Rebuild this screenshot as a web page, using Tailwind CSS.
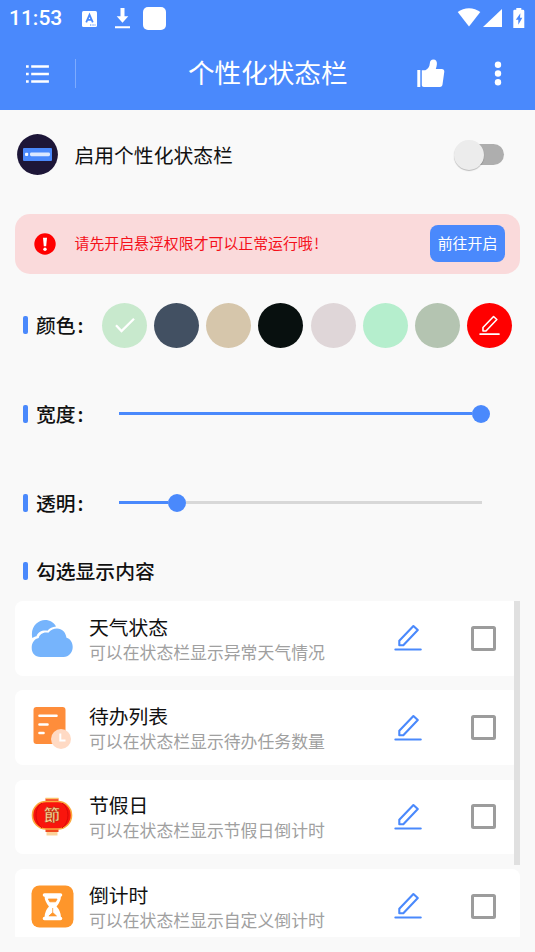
<!DOCTYPE html>
<html lang="zh-CN">
<head>
<meta charset="utf-8">
<title>个性化状态栏</title>
<script src="https://cdn.jsdelivr.net/npm/@tailwindcss/browser@4"></script>
</head>
<body class="w-[535px] h-[952px] overflow-hidden bg-[#f9f9f9] font-['Noto_Sans_CJK_SC',sans-serif] text-[#111]">
<svg class="hidden">
  <symbol id="edit" viewBox="0 0 28 28">
    <path d="M5.300 21.300v-4.600L19.400 2l4.400 4L9.300 21.300z" fill="none" stroke="currentColor" stroke-width="2.100" stroke-linejoin="round"/>
    <path d="M1.400 25.500h25.300" stroke="currentColor" stroke-width="2.200" stroke-linecap="round"/>
  </symbol>
</svg>
<div class="h-[952px] flex flex-col">
  <header class="h-[110px] shrink-0 bg-[#4a89fc] text-white flex flex-col">
    <div class="h-[37px] pl-[9px] pr-[10px] flex items-center">
      <span class="w-[73px] font-['Roboto',sans-serif] font-medium text-[21px] leading-none">11:53</span>
      <svg class="w-[15px] h-[16px]" viewBox="0 0 15 16"><rect width="15" height="16" rx="1.5" fill="#fff"/><path d="M4.2 11.3 7.5 3.8l3.3 7.5M5.5 8.9h4" fill="none" stroke="#4a89fc" stroke-width="1.8"/><path d="M8 14h1.3M10.4 14h1.3M12.5 14h1" stroke="#4a89fc" stroke-width="1.2"/></svg>
      <svg class="ml-[17px] w-[17px] h-[21px]" viewBox="0 0 17 21"><path d="M6.5 0h4v8.3h3.800l-5.800 6.500-5.800-6.500h3.800zM1 18.200h15v2H1z" fill="#fff"/></svg>
      <div class="ml-3 w-[23px] h-[23px] rounded-[5px] bg-white"></div>
      <div class="ml-auto pb-[2px] flex items-center">
        <svg class="w-[24px] h-[19px]" viewBox="0 0 24 19"><path d="M.7 4.100C7-1 17-1 23.300 4.100L12 18.500z" fill="#fff"/></svg>
        <svg class="ml-[2px] mt-[1px] w-[19px] h-[18px]" viewBox="0 0 19 18"><path d="M19 0v18H0z" fill="#fff"/></svg>
        <svg class="ml-[11px] w-[12px] h-[20px]" viewBox="0 0 12 20"><path d="M3.300 0h5v1.800H10A1.300 1.300 0 0 1 11.300 3v17H.3V3a1.300 1.300 0 0 1 1.300-1.200h1.700z" fill="#fff"/><path d="M7.400 5.200 2.800 11.800h2.500v5l4-7H7z" fill="#4a89fc"/></svg>
      </div>
    </div>
    <div class="h-[73px] flex items-center">
      <svg class="ml-[26px] w-[24px] h-[20px]" viewBox="0 0 24 20"><g stroke="#fff" stroke-width="2.600"><path d="M5.200 2.500h17.700M5.200 10h17.700M5.200 17.500h17.700"/><path d="M0 2.500h2.700M0 10h2.700M0 17.500h2.700"/></g></svg>
      <div class="ml-[25px] w-px h-[29px] bg-[#7dabff]"></div>
      <h1 class="ml-[112px] pb-[4px] w-[229px] text-[26.600px] leading-[38px] whitespace-nowrap">个性化状态栏</h1>
      <svg class="w-[28px] h-[29px]" viewBox="0 0 28 29"><path d="M.3 11h3v17h-3zM4.800 11.200h3.500c3-1.400 4.200-3.500 4.500-6.600.1-2.700 1.500-4.100 3.500-4.100 2.700 0 3.800 1.900 3.600 4.500-.1 1.800-.5 3.300-1.100 4.900h5.900c1.800 0 2.800 1.200 2.600 2.900l-1.800 12.700c-.2 1.600-1 2.500-2.600 2.500H7c-1.500 0-2.200-.7-2.200-2z" fill="#fff"/></svg>
      <svg class="ml-[48.500px] w-[8px] h-[25px]" viewBox="0 0 8 25"><g fill="#fff"><circle cx="4" cy="3.800" r="3.200"/><circle cx="4" cy="12.500" r="3.200"/><circle cx="4" cy="21.300" r="3.200"/></g></svg>
    </div>
  </header>

  <section class="h-[104px] shrink-0 pl-[17px] pr-[31px] pb-[15px] flex items-center">
    <svg class="w-[41px] h-[41px]" viewBox="0 0 41 41"><circle cx="20.500" cy="20.500" r="20.400" fill="#1d1638"/><rect x="6" y="14" width="29" height="13" rx="1" fill="#4a89fc"/><rect x="8" y="18.700" width="3.200" height="3.200" rx="1" fill="#f4f8ff"/><rect x="13" y="18.500" width="20" height="3.700" rx="1.400" fill="#dce8ff"/></svg>
    <span class="ml-[16.500px] text-[19.800px] leading-[30px]">启用个性化状态栏</span>
    <div class="ml-auto w-[50px] h-[30px] flex items-center">
      <div class="w-[30px] h-[30px] z-10 rounded-full bg-[#ececec] shadow-[0_1px_1px_rgba(0,0,0,0.25)]"></div>
      <div class="-ml-[20px] w-[40px] h-[21px] rounded-full bg-[#aeaeae]"></div>
    </div>
  </section>

  <section class="mx-[15px] h-[59.500px] shrink-0 rounded-[15px] bg-[#fadadb] pl-[19px] pr-[15px] flex items-center text-[14.900px]">
    <svg class="w-[22px] h-[22px]" viewBox="0 0 22 22"><circle cx="11" cy="11" r="10.700" fill="#f00"/><path d="M9 4.800h4l-.8 8.400H9.800z" fill="#fff"/><circle cx="11" cy="16.300" r="1.700" fill="#fff"/></svg>
    <span class="ml-[18.500px] pb-px text-[#f5101a] whitespace-nowrap">请先开启悬浮权限才可以正常运行哦<span class="ml-[1.500px]">!</span></span>
    <button class="ml-auto w-[75px] h-[37px] pb-px rounded-[8px] bg-[#4a89fc] text-white whitespace-nowrap">前往开启</button>
  </section>

  <section class="h-[89px] mt-[7.500px] shrink-0 pl-[23px] pr-[23px] pb-px flex items-center">
    <div class="w-[5px] h-[18px] rounded-[2px] bg-[#4a89fc]"></div>
    <span class="ml-[8px] pb-px w-[66px] text-[19.800px] font-medium whitespace-nowrap">颜色<span class="ml-[2px]">:</span></span>
    <div class="w-[410px] flex justify-between">
      <div class="w-[45px] h-[45px] rounded-full bg-[#c8e9cd] flex items-center justify-center"><svg class="w-[22px] h-[18px]" viewBox="0 0 22 18"><path d="M2 9.300 7.500 15 20 2.800" fill="none" stroke="#fff" stroke-width="2.300"/></svg></div>
      <div class="w-[45px] h-[45px] rounded-full bg-[#425062]"></div>
      <div class="w-[45px] h-[45px] rounded-full bg-[#d6c6ab]"></div>
      <div class="w-[45px] h-[45px] rounded-full bg-[#08100f]"></div>
      <div class="w-[45px] h-[45px] rounded-full bg-[#dfd6d8]"></div>
      <div class="w-[45px] h-[45px] rounded-full bg-[#b5eecd]"></div>
      <div class="w-[45px] h-[45px] rounded-full bg-[#b4c4b1]"></div>
      <div class="w-[45px] h-[45px] rounded-full bg-[#f00] text-white flex items-center justify-center"><svg class="w-[21px] h-[21px]"><use href="#edit"/></svg></div>
    </div>
  </section>

  <section class="h-[89px] shrink-0 pl-[23px] pb-[2px] flex items-center">
    <div class="w-[5px] h-[18px] rounded-[2px] bg-[#4a89fc]"></div>
    <span class="ml-[8px] w-[83px] text-[19.800px] font-medium whitespace-nowrap">宽度<span class="ml-[2px]">:</span></span>
    <div class="w-[353px] h-[3px] bg-[#4a89fc]"></div>
    <div class="w-[18px] h-[18px] rounded-full bg-[#4a89fc]"></div>
  </section>

  <section class="h-[89px] shrink-0 pl-[23px] pb-[2px] flex items-center">
    <div class="w-[5px] h-[18px] rounded-[2px] bg-[#4a89fc]"></div>
    <span class="ml-[8px] w-[83px] text-[19.800px] font-medium whitespace-nowrap">透明<span class="ml-[2px]">:</span></span>
    <div class="w-[49px] h-[3px] bg-[#4a89fc]"></div>
    <div class="w-[18px] h-[18px] rounded-full bg-[#4a89fc]"></div>
    <div class="w-[296px] h-[3px] bg-[#d8d8d8]"></div>
  </section>

  <section class="h-[53px] shrink-0 pl-[23px] pb-[8px] flex items-center">
    <div class="w-[5px] h-[18px] rounded-[2px] bg-[#4a89fc]"></div>
    <h2 class="ml-[8px] text-[19.800px] font-medium">勾选显示内容</h2>
  </section>

  <main class="relative mx-[15px] h-[336px] shrink-0 overflow-hidden flex flex-col gap-[14.800px]">
    <article class="h-[74.500px] shrink-0 bg-white rounded-[8px] pl-[16px] pr-[24px] flex items-center">
      <svg class="w-[43px] h-[43px]" viewBox="0 0 43 43"><path d="M1.300 21C-1 10 7 3 14 3c5 0 9 2.700 11 6.400-3.500.2-6.400 1.700-8.600 4.300C11 13 7 15 5.500 19.200c-1.800.2-3 .9-4.200 1.800z" fill="#76b4fc"/><path d="M9.500 40C4 40 .5 36 .7 30.500c.1-5 3-8.700 7-9.500.8-3.700 5-6.500 9.600-5.200C20 12.500 22.700 11.500 26 11.500c5 0 8.700 3.700 9.500 9.200 4 1.300 6.200 4.800 6.200 9.300 0 5.500-4 10-9 10z" fill="#76b4fc"/></svg>
      <div class="ml-[15px] pt-px w-[304.500px] whitespace-nowrap"><h3 class="text-[19.800px] leading-[25px]">天气状态</h3><p class="text-[16.850px] leading-[25px] text-[#a0a0a0]">可以在状态栏显示异常天气情况</p></div>
      <svg class="w-[28px] h-[28px] text-[#4a89fc]"><use href="#edit"/></svg>
      <div class="ml-auto mr-[0.500px] w-[25px] h-[25px] border-3 border-[#9c9c9c] rounded-[2.500px]"></div>
    </article>
    <article class="h-[74.500px] shrink-0 bg-white rounded-[8px] pl-[16px] pr-[24px] flex items-center">
      <svg class="w-[43px] h-[43px]" viewBox="0 0 43 43"><rect x="2.500" y="1" width="32" height="37" rx="3" fill="#fe8d3b"/><path d="M8.500 9.700h17M8.500 18.500h8M8.500 27h4" stroke="#fff" stroke-width="2.600" stroke-linecap="round"/><circle cx="30" cy="33" r="10" fill="#ffdac4"/><path d="M29.300 27.500v7h5.200" fill="none" stroke="#fff" stroke-width="2"/></svg>
      <div class="ml-[15px] pt-px w-[304.500px] whitespace-nowrap"><h3 class="text-[19.800px] leading-[25px]">待办列表</h3><p class="text-[16.850px] leading-[25px] text-[#a0a0a0]">可以在状态栏显示待办任务数量</p></div>
      <svg class="w-[28px] h-[28px] text-[#4a89fc]"><use href="#edit"/></svg>
      <div class="ml-auto mr-[0.500px] w-[25px] h-[25px] border-3 border-[#9c9c9c] rounded-[2.500px]"></div>
    </article>
    <article class="h-[74.500px] shrink-0 bg-white rounded-[8px] pl-[16px] pr-[24px] flex items-center">
      <svg class="w-[43px] h-[43px]" viewBox="0 0 43 43"><path d="M14.500 3.500h13v4h-13z" fill="#f63b21"/><path d="M14.500 3.500h13" stroke="#fbc36b" stroke-width="1.500"/><path d="M15.500 35h11v5.500h-11z" fill="#fbd29a"/><path d="M14.500 33.500h13v3.500h-13z" fill="#f04a20"/><rect x="1.500" y="6.500" width="39" height="27.500" rx="13.500" fill="#f9150d" stroke="#fba83c" stroke-width="1.600"/><path d="M11 8C3 13 3 27 11 33M31 8c8 5 8 19 0 25" fill="none" stroke="#d90808" stroke-width="1"/><text x="21" y="26" text-anchor="middle" font-size="16" font-weight="700" fill="#ffd898" stroke="#a83a10" stroke-width="0.500">節</text></svg>
      <div class="ml-[15px] pt-px w-[304.500px] whitespace-nowrap"><h3 class="text-[19.800px] leading-[25px]">节假日</h3><p class="text-[16.850px] leading-[25px] text-[#a0a0a0]">可以在状态栏显示节假日倒计时</p></div>
      <svg class="w-[28px] h-[28px] text-[#4a89fc]"><use href="#edit"/></svg>
      <div class="ml-auto mr-[0.500px] w-[25px] h-[25px] border-3 border-[#9c9c9c] rounded-[2.500px]"></div>
    </article>
    <article class="h-[74.500px] shrink-0 bg-white rounded-[8px] pl-[16px] pr-[24px] flex items-center">
      <svg class="w-[43px] h-[43px]" viewBox="0 0 43 43"><rect x=".5" y=".5" width="42" height="42" rx="8" fill="#fe962b"/><path d="M14.500 10.500h14.500c0 6-2.500 8.500-4.800 11 2.300 2.500 4.800 5 4.800 11H14.500c0-6 2.500-8.500 4.800-11-2.300-2.500-4.800-5-4.800-11z" fill="#fff" stroke="#fff" stroke-width="2"/><path d="M17.300 14h8.800l-1.500 2.800h-5.800zM21.700 23v4.500l3.800 3.500h-7.600l3.800-3.500" fill="#fe962b" stroke="#fe962b" stroke-width=".8"/><path d="M13.500 10h16M13.500 33.500h16" stroke="#fff" stroke-width="3.600" stroke-linecap="round"/></svg>
      <div class="ml-[15px] pt-px w-[304.500px] whitespace-nowrap"><h3 class="text-[19.800px] leading-[25px]">倒计时</h3><p class="text-[16.850px] leading-[25px] text-[#a0a0a0]">可以在状态栏显示自定义倒计时</p></div>
      <svg class="w-[28px] h-[28px] text-[#4a89fc]"><use href="#edit"/></svg>
      <div class="ml-auto mr-[0.500px] w-[25px] h-[25px] border-3 border-[#9c9c9c] rounded-[2.500px]"></div>
    </article>
    <div class="absolute right-0 top-0 w-[6px] h-[264px] bg-[#e0e0e0]"></div>
  </main>
</div>
</body>
</html>
